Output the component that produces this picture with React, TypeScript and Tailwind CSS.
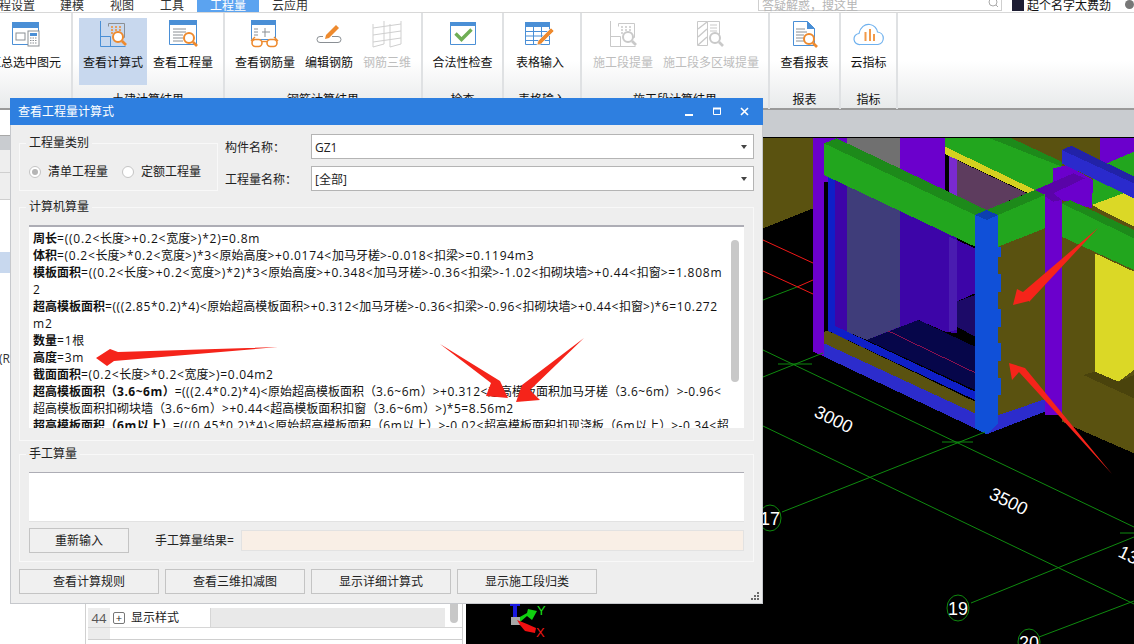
import React from "react";

const FONT = "font-['Microsoft_YaHei','Open_Sans','Noto_Sans_CJK_SC',sans-serif]";

const B = "#4a8fd6";
const O = "#ee8a2e";

function Mag({ x, y, c = O, r = 5 }: { x: number; y: number; c?: string; r?: number }) {
  return (
    <g fill="none" stroke={c}>
      <circle cx={x} cy={y} r={r} strokeWidth="2" fill="#fff" />
      <path d={`M${x + r - 1} ${y + r - 1}l4 4`} strokeWidth="2.6" />
    </g>
  );
}

function IconSummary() {
  return (
    <svg width="30" height="28" viewBox="0 0 30 28">
      <path d="M2.5 2.5h26v22h-26z" fill="#fff" stroke={B} />
      <rect x="2" y="2" width="27" height="6" fill={B} />
      <rect x="6" y="13" width="9" height="7" fill="none" stroke="#8a8f94" />
      <rect x="18" y="11" width="11" height="15" fill="#fff" stroke="#8a8f94" />
      <rect x="20" y="13" width="7" height="3" fill={B} />
      <path d="M20 18h7M20 20.5h7M20 23h7" stroke="#8a8f94" strokeDasharray="1.5 1" />
    </svg>
  );
}
function IconCalc({ gray = false }: { gray?: boolean }) {
  const s = gray ? "#c9c9c9" : B;
  const o = gray ? "#c9c9c9" : O;
  const g = gray ? "#c9c9c9" : "#8a8f94";
  return (
    <svg width="30" height="28" viewBox="0 0 30 28">
      <path d="M2.5 1v25.5h25M2.5 16.5h10v10" fill="none" stroke={s} />
      <path d="M10.5 6.5V3.5h16v14h-6" fill="none" stroke={g} />
      <path d="M13 7h2M17 7h2M21 7h2M13 10h2M17 10h2M21 10h2M13 13h2" stroke={gray ? "#c9c9c9" : "#ee8a2e"} strokeWidth="1.6" />
      <Mag x={20} y={17} c={gray ? "#c9c9c9" : o} />
    </svg>
  );
}
function IconQty() {
  return (
    <svg width="30" height="30" viewBox="0 0 30 30">
      <path d="M1.5 1.5h27v24h-27z" fill="#fff" stroke={B} />
      <rect x="1" y="1" width="28" height="5" fill={B} />
      <path d="M5 10h13M5 13h13M5 16h10M5 19h10M5 22h10" stroke="#8a8f94" />
      <Mag x={21} y={19} />
    </svg>
  );
}
function IconGlasses() {
  return (
    <svg width="30" height="30" viewBox="0 0 30 30">
      <path d="M1.5 1.5h24v19h-24z" fill="#fff" stroke={B} />
      <rect x="1" y="1" width="25" height="5" fill={B} />
      <path d="M4 10h4M4 13h4M4 16h4M15 9v9M12 13h8" stroke="#8a8f94" />
      <path d="M1 22l4-4M28 22l-4-4" stroke={O} strokeWidth="1.4" />
      <rect x="2" y="20.5" width="10" height="7" rx="3.4" fill="#fff" stroke={O} strokeWidth="1.6" />
      <rect x="17" y="20.5" width="10" height="7" rx="3.4" fill="#fff" stroke={O} strokeWidth="1.6" />
      <path d="M12 22.5h5" stroke={O} strokeWidth="1.4" />
    </svg>
  );
}
function IconEdit() {
  return (
    <svg width="26" height="28" viewBox="0 0 26 28">
      <path d="M16 16.5h6a3 3 0 0 1 0 6H4a3 3 0 0 1 0-6h3" fill="none" stroke="#8a8f94" />
      <path d="M10 15l10-10 3 3-10 10-4 1z" fill={O} />
    </svg>
  );
}
function IconGrid() {
  return (
    <svg width="30" height="28" viewBox="0 0 30 28">
      <path d="M1 4v23M12 1v23M18 4v23M29 1v23M1 8l28-4M1 15l28-4M1 22l28-4M1 27l11-3M18 27l11-3" fill="none" stroke="#cfcfcf" />
    </svg>
  );
}
function IconCheck() {
  return (
    <svg width="26" height="24" viewBox="0 0 26 24">
      <path d="M.5.5h25v22H.5z" fill="#fff" stroke={B} />
      <rect x="0" y="0" width="26" height="4" fill={B} />
      <path d="M5.5 11.5l6 6 10-10" fill="none" stroke="#6fae55" strokeWidth="3.4" />
    </svg>
  );
}
function IconTable() {
  return (
    <svg width="30" height="24" viewBox="0 0 30 24">
      <path d="M.5.5h24v22H.5z" fill="#fff" stroke={B} />
      <rect x="0" y="0" width="25" height="5" fill={B} />
      <path d="M1 9.5h24M1 14h24M1 18.5h24M8.5 5v18M16.5 5v18" stroke={B} />
      <path d="M13 19l13-13 3 3-13 13-4 1z" fill={O} stroke="#fff" strokeWidth=".6" />
    </svg>
  );
}
function IconHatch() {
  return (
    <svg width="30" height="28" viewBox="0 0 30 28">
      <path d="M1.5 1.5h10v24h-10z" fill="#fff" stroke="#c9c9c9" />
      <path d="M2 9l9-7M2 17l9-8M2 25l9-8" stroke="#c9c9c9" strokeWidth="1.4" />
      <path d="M11.500 1.500h12v13M14 5h7M14 8h7M14 11h7" fill="none" stroke="#c9c9c9" />
      <Mag x={19} y={18} c="#c9c9c9" />
    </svg>
  );
}
function IconReport() {
  return (
    <svg width="26" height="28" viewBox="0 0 26 28">
      <path d="M1.500 1.500h14l7 7v17h-21z" fill="#fff" stroke={B} />
      <path d="M15 1l8 8h-8z" fill={B} />
      <path d="M4 9h9M4 12h11M4 15h8M4 18h8M4 21h8" stroke="#8a8f94" />
      <Mag x={17} y={19} />
    </svg>
  );
}
function IconCloud() {
  return (
    <svg width="32" height="24" viewBox="0 0 32 24">
      <path d="M7 22.500a5.500 5.500 0 0 1-1-11c1-6 6-10 11-9 4 .6 7 4 7.500 7.500a6.300 6.300 0 0 1 .500 12.500z" fill="#fff" stroke="#6fb1ee" strokeWidth="1.200" />
      <path d="M12.500 10v9M17 7v12M21 12v7" stroke="#f29a4a" strokeWidth="2" />
    </svg>
  );
}

type Item = { w: number; label: string; icon: React.ReactNode; active?: boolean; gray?: boolean };

function Group({ width, pl = 0, label, items }: { width: number; pl?: number; label: string; items: Item[] }) {
  return (
    <div className="h-[96px] flex flex-col border-r-2 border-[#dfe1e3] shrink-0" style={{ width }}>
      <div className="flex h-[67px] mt-[5px]" style={{ paddingLeft: pl }}>
        {items.map((it) => (
          <div
            key={it.label}
            className={`flex flex-col items-center shrink-0 ${it.active ? "bg-[#c8d8ee]" : ""}`}
            style={{ width: it.w }}
          >
            <div className="h-[29px] mt-[1px] flex items-center justify-center">{it.icon}</div>
            <div className={`mt-[6px] text-[12px] leading-[18px] whitespace-nowrap ${it.gray ? "text-[#bdbdbd]" : "text-[#111]"}`}>
              {it.label}
            </div>
          </div>
        ))}
      </div>
      <div className="text-center text-[12px] leading-[18px] mt-[6px] text-[#111] whitespace-nowrap">{label}</div>
    </div>
  );
}

function Legend({ children }: { children: React.ReactNode }) {
  return <div className="absolute left-[6px] -top-[10px] bg-[#eeeeee] px-[3px] text-[12px] leading-[18px] text-[#222]">{children}</div>;
}

function Btn({ children, w = 140 }: { children: React.ReactNode; w?: number }) {
  return (
    <div
      className="h-[25px] border border-[#c4c4c4] bg-[#f0f0f0] flex items-center justify-center text-[12px] text-[#222] shrink-0"
      style={{ width: w }}
    >
      {children}
    </div>
  );
}

function Select({ value }: { value: string }) {
  return (
    <div className="flex-1 h-[25px] bg-white border border-[#b4b4b4] flex items-center justify-between pl-[3px] pr-[6px] text-[12px] text-[#222]">
      <span className="pt-[2px]">{value}</span>
      <svg width="6" height="4" viewBox="0 0 6 4"><path d="M0 0h6L3 4z" fill="#444" /></svg>
    </div>
  );
}

function Spaced({ text, track }: { text: string; track: string }) {
  return (
    <>
      {text.split(/([\x00-\x7f]+)/).map((p, i) =>
        i % 2 === 1 ? (
          <span key={i} className={track}>{p}</span>
        ) : (
          <span key={i}>{p}</span>
        )
      )}
    </>
  );
}

const LINES: [string, string, string][] = [
  ["周长", "=((0.2<长度>+0.2<宽度>)*2)=0.8m", "tracking-[0.77px]"],
  ["体积", "=(0.2<长度>*0.2<宽度>)*3<原始高度>+0.0174<加马牙槎>-0.018<扣梁>=0.1194m3", "tracking-[0.72px]"],
  ["模板面积", "=((0.2<长度>+0.2<宽度>)*2)*3<原始高度>+0.348<加马牙槎>-0.36<扣梁>-1.02<扣砌块墙>+0.44<扣窗>=1.808m", "tracking-[0.77px]"],
  ["", "2", "tracking-[0.77px]"],
  ["超高模板面积", "=(((2.85*0.2)*4)<原始超高模板面积>+0.312<加马牙槎>-0.36<扣梁>-0.96<扣砌块墙>+0.44<扣窗>)*6=10.272", "tracking-[0.6px]"],
  ["", "m2", "tracking-[0.77px]"],
  ["数量", "=1根", "tracking-[0.77px]"],
  ["高度", "=3m", "tracking-[0.77px]"],
  ["截面面积", "=(0.2<长度>*0.2<宽度>)=0.04m2", "tracking-[0.68px]"],
  ["超高模板面积（3.6~6m）", "=(((2.4*0.2)*4)<原始超高模板面积（3.6~6m）>+0.312<超高模板面积加马牙槎（3.6~6m）>-0.96<", "tracking-[0.5px]"],
  ["", "超高模板面积扣砌块墙（3.6~6m）>+0.44<超高模板面积扣窗（3.6~6m）>)*5=8.56m2", "tracking-[0.55px]"],
  ["超高模板面积（6m以上）", "=(((0.45*0.2)*4)<原始超高模板面积（6m以上）>-0.02<超高模板面积扣现浇板（6m以上）>-0.34<超", "tracking-[0.6px]"],
];

function Scene() {
  const olive = "#5a5210";
  const green = "#22a61e";
  const dgreen = "#1d8a1a";
  const purple = "#6b00cc";
  const blue = "#1050d8";
  const base = "#2c2ccc";
  return (
    <svg className="block w-full h-full" viewBox="466 137 668 507" shapeRendering="crispEdges">
      <g transform="translate(760 130) scale(.3333)">
        <polygon points="10,25 160,25 160,235 10,295" fill={olive} />
        <polygon points="690,25 1020,25 1020,130 1122,130 1122,300 900,230" fill={olive} />
        <polygon points="1020,25 1122,25 1122,65 1020,110" fill={purple} />
        <polygon points="160,25 192,25 192,680 160,665" fill={purple} />
        <rect x="192" y="25" width="68" height="130" fill={purple} />
        <rect x="260" y="25" width="160" height="130" fill="#707070" />
        <rect x="420" y="25" width="135" height="200" fill={purple} />
        <polygon points="205,140 260,165 260,605 205,590" fill="#3d05a8" />
        <polygon points="205,140 225,150 225,600 205,590" fill="#0f1fc8" />
        <polygon points="260,165 420,240 420,590 320,630 260,605" fill="#3f3d7a" />
        <polygon points="420,240 590,320 590,610 555,605 475,570 320,630 420,590" fill="#3d05a8" />
        <polygon points="590,90 800,190 680,240 590,200" fill="#5d3c5e" />
        <polygon points="568,75 590,85 590,200 568,190" fill="#7a2ad0" />
        <polygon points="568,320 590,330 590,600 568,605" fill="#4a1cb0" />
        <polygon points="590,330 645,355 645,490 590,515" fill="#3d05a8" />
        <polygon points="590,515 645,495 645,620 590,590" fill="#1c0a68" />
        <polygon points="320,630 475,570 645,650 645,780" fill="#06064a" />
        <line x1="385" y1="603" x2="645" y2="728" stroke="#8a1050" strokeWidth="3" />
        <polygon points="205,590 225,588 645,785 645,810 205,603" fill="#0f1fc8" />
        <polygon points="192,605 205,603 645,815 645,850 192,640" fill={olive} />
        <polygon points="192,640 645,850 645,895 192,680" fill={base} />
        <polygon points="555,25 690,25 905,110 880,115 880,165 825,180 555,50" fill={green} />
        <polygon points="690,25 755,25 905,95 905,110" fill={dgreen} />
        <polygon points="555,50 825,180 805,190 555,72" fill="#d6d020" />
        <polygon points="905,320 1122,420 1122,970 905,875" fill={olive} />
        <polygon points="1005,370 1122,425 1122,720 1075,755 1005,725" fill="#dbd826" />
        <polygon points="970,735 1005,725 1075,755 1122,735 1122,805" fill="#4a430c" />
        <polygon points="995,155 1040,100 1122,65 1122,205 1090,190 995,225" fill={green} />
        <polygon points="995,225 1090,190 1122,205 1122,290" fill="#dbd826" />
        <rect x="855" y="190" width="50" height="665" fill={purple} />
        <polygon points="880,115 920,105 1000,150 995,235 905,210 855,190 825,180 880,160" fill={purple} />
        <polygon points="825,180 940,130 975,145 880,190 905,210 880,215" fill="#5a04a8" />
        <polygon points="905,60 935,47 1122,140 1122,205 905,100" fill="#2a2acc" />
        <polygon points="905,60 935,47 1122,140 1122,160" fill="#2222a8" />
        <polygon points="905,220 930,210 1122,300 1122,420 905,320" fill={green} />
        <polygon points="905,220 930,210 1122,300 1122,325" fill={dgreen} />
        <polygon points="192,40 645,255 645,350 192,135" fill={green} />
        <polygon points="192,40 230,25 680,240 645,255" fill={dgreen} />
        <polygon points="715,255 855,190 855,295 715,350" fill={green} />
        <polygon points="680,240 825,180 855,195 715,255" fill={dgreen} />
        <polygon points="715,350 855,295 855,810 715,855" fill={olive} />
        <polygon points="715,855 855,808 855,845 680,913" fill={base} />
        <polygon points="645,255 680,240 715,255 715,880 680,913 645,895" fill={blue} />
        <polygon points="645,255 680,240 715,255 680,270" fill="#0c3fb0" />
        <rect x="715" y="350" width="8" height="32" fill={blue} />
        <rect x="715" y="433" width="8" height="52" fill={blue} />
        <rect x="715" y="538" width="8" height="52" fill={blue} />
        <rect x="715" y="640" width="8" height="52" fill={blue} />
        <rect x="715" y="743" width="8" height="52" fill={blue} />
      </g>
      <g shapeRendering="auto" strokeWidth="1" fill="none">
        <path d="M763 240l50 23M763 271l50 23M797 287l16-7" stroke="#f01818" />
        <path d="M763 300l34-13M763 377l60-24M778 364h34M942 442h31M1120 533h14" stroke="#0f8a0f" />
        <path d="M763 350L1134 527M763 426L1134 604M782 512L985 432M971 603L1134 537M1039 637L1134 601" stroke="#0f8a0f" />
        <ellipse cx="770" cy="518" rx="11" ry="13" stroke="#0f8a0f" />
        <ellipse cx="958" cy="608" rx="11" ry="13" stroke="#0f8a0f" />
        <ellipse cx="1029" cy="642" rx="11" ry="13" stroke="#0f8a0f" />
      </g>
      <g fill="#fff" fontFamily="'Liberation Sans', sans-serif" shapeRendering="auto">
        <text x="770" y="525" fontSize="18" textAnchor="middle">17</text>
        <text x="958" y="615" fontSize="18" textAnchor="middle">19</text>
        <text x="1029" y="649" fontSize="18" textAnchor="middle">20</text>
        <text transform="translate(813 416) rotate(26)" fontSize="18">3000</text>
        <text transform="translate(988 498) rotate(26)" fontSize="18">3500</text>
        <text transform="translate(1117 556) rotate(26)" fontSize="18">13</text>
        <text x="537" y="615" fontSize="13" fill="#19e019">Y</text>
        <text x="536" y="637" fontSize="13" fill="#f01818">X</text>
      </g>
      <g shapeRendering="auto">
        <rect x="513" y="604" width="4" height="13" fill="#1818e0" />
        <rect x="510" y="604" width="10" height="2" fill="#1818e0" />
        <polygon points="518,618 527,613 528,609 537,611 532,620 527,616 520,622" fill="#10d010" />
        <rect x="511" y="617" width="9" height="8" fill="#a8a8a8" />
        <polygon points="517,620 527,624 536,628 535,633 525,631 520,625" fill="#f01010" />
      </g>
      <polygon points="1098,228 1029,302 1029,301 1013,305 1017,289 1023,292" fill="#f5241a" shapeRendering="auto" />
      <polygon points="1112,474 1025,368 1009,363 1012,380 1019,372" fill="#f5241a" shapeRendering="auto" />
    </svg>
  );
}

export default function App() {
  return (
    <div className={`relative w-[1134px] h-[644px] overflow-hidden bg-white flex flex-col ${FONT}`}>
      <div className="h-[13px] border-b border-[#d8d8d8] flex text-[12px] leading-[11px] text-[#333] shrink-0 overflow-hidden">
        <div className="w-[197px] flex shrink-0 relative overflow-hidden">
          <span className="ml-[-1px] w-[61px] whitespace-nowrap">程设置</span>
          <span className="w-[50px]">建模</span>
          <span className="w-[50px]">视图</span>
          <span className="w-[37px]">工具</span>
        </div>
        <div className="w-[62px] bg-[#5ba3f0] text-white text-center shrink-0">工程量</div>
        <div className="w-[13px] shrink-0" />
        <div className="shrink-0 w-[486px]">云应用</div>
        <div className="w-[244px] h-[11px] border border-t-0 border-[#cfcfcf] pl-[3px] text-[#b5b5b5] shrink-0 flex justify-between pr-[2px]">
          <span>答疑解惑，搜这里</span>
          <svg width="11" height="9" viewBox="0 0 11 9"><circle cx="5" cy="2" r="4" fill="none" stroke="#aaa" /><path d="M8 5l2 2" stroke="#aaa" /></svg>
        </div>
        <div className="w-[12px] h-[11px] bg-[#1d1d33] ml-[10px] shrink-0" />
        <div className="ml-[3px] text-[#111] shrink-0 whitespace-nowrap w-[98px]">起个名字太费劲</div>
        <div className="w-[9px] h-[9px] rounded-full bg-[#777] shrink-0" />
      </div>
      <div className="h-[97px] shrink-0 flex border-b-2 border-[#9a9a9a] bg-gradient-to-b from-white from-50% to-[#e8eaeb]">
        <Group width={73} label="" items={[{ w: 50, label: "汇总选中图元", icon: <IconSummary /> }]} />
        <Group width={152} pl={6} label="土建计算结果" items={[
          { w: 68, label: "查看计算式", icon: <IconCalc />, active: true },
          { w: 72, label: "查看工程量", icon: <IconQty /> },
        ]} />
        <Group width={198} pl={4} label="钢筋计算结果" items={[
          { w: 72, label: "查看钢筋量", icon: <IconGlasses /> },
          { w: 56, label: "编辑钢筋", icon: <IconEdit /> },
          { w: 60, label: "钢筋三维", icon: <IconGrid />, gray: true },
        ]} />
        <Group width={81} label="检查" items={[{ w: 79, label: "合法性检查", icon: <IconCheck /> }]} />
        <Group width={78} label="表格输入" items={[{ w: 72, label: "表格输入", icon: <IconTable /> }]} />
        <Group width={188} pl={5} label="施工段计算结果" items={[
          { w: 72, label: "施工段提量", icon: <IconCalc gray />, gray: true },
          { w: 104, label: "施工段多区域提量", icon: <IconHatch />, gray: true },
        ]} />
        <Group width={71} label="报表" items={[{ w: 69, label: "查看报表", icon: <IconReport /> }]} />
        <Group width={57} label="指标" items={[{ w: 55, label: "云指标", icon: <IconCloud /> }]} />
      </div>

      <div className="flex-1 flex min-h-0">
        <div className="w-[466px] shrink-0 flex flex-col bg-white">
          <div className="h-[25px] shrink-0" />
          <div className="h-[15px] bg-[#c9ccd0] border-t border-[#a8a8a8] shrink-0" />
          <div className="h-[23px] bg-[#eeeeee] border-b border-[#cfcfcf] shrink-0" />
          <div className="h-[27px] bg-[#eeeeee] border-b border-[#cfcfcf] shrink-0" />
          <div className="h-[52px] shrink-0" />
          <div className="h-[21px] bg-[#c8d8ee] shrink-0" />
          <div className="h-[77px] shrink-0" />
          <div className="h-[17px] text-[12px] leading-[17px] text-[#333] shrink-0 -ml-[1px]">(R</div>
          <div className="flex-1 pl-[85px] flex flex-col justify-end">
            <div className="h-[40px] border-l border-[#d0d0d0] pl-[2px] flex flex-col text-[13px]">
              <div className="flex-1 border-r border-[#cfcfcf] mr-[3px] flex flex-col">
                <div className="h-[4px]" />
                <div className="h-[20px] flex border-b border-[#d6d6d6]">
                  <div className="w-[22px] bg-[#ececec] text-[#555] text-center leading-[20px]">44</div>
                  <div className="w-[101px] flex items-center pl-[3px] gap-[6px] border-r border-[#d6d6d6] text-[#222] text-[12px]">
                    <span className="w-[12px] h-[12px] border border-[#777] rounded-[2px] text-[11px] leading-[9px] text-center">+</span>
                    显示样式
                  </div>
                  <div className="w-[234px] bg-[#e9e9e9]" />
                  <div className="w-[16px] relative"><div className="absolute left-[5px] -top-[4px] w-[8px] h-[19px] bg-[#c8c8c8] rounded-b-[4px]" /></div>
                </div>
                <div className="h-[11px] flex"><div className="w-[22px] bg-[#ececec]" /></div>
                <div className="border-t border-[#cfcfcf] h-[4px]" />
              </div>
            </div>
          </div>
        </div>
        <div className="flex-1 flex flex-col min-w-0">
          <div className="h-[27px] bg-[#c9ccd0] shrink-0" />
          <div className="flex-1 bg-black min-h-0 relative">
            <div className="absolute inset-0"><Scene /></div>
          </div>
        </div>
      </div>

      {/* Dialog window */}
      <div className="absolute left-[10px] top-[98px] w-[753px] h-[506px] bg-[#eeeeee] border-r border-b border-l border-[#c6c8cc] flex flex-col">
        <div className="h-[27px] bg-[#2e7fe0] text-white text-[12px] flex items-center pl-[8px] shrink-0 relative -mx-px">
          <span>查看工程量计算式</span>
          <svg className="absolute right-[8px] top-[8px]" width="70" height="12" viewBox="0 0 70 12">
            <path d="M0 9h8" stroke="#fff" strokeWidth="2" />
            <path d="M28.500 2.500h7v6h-7z" fill="none" stroke="#fff" />
            <path d="M28 2.500h8" stroke="#fff" strokeWidth="2" />
            <path d="M56 2l7 7M63 2l-7 7" stroke="#fff" strokeWidth="1.600" />
          </svg>
        </div>
        <div className="flex-1 flex flex-col px-[8px] min-h-0">
          <div className="flex gap-[7px] mt-[9px] h-[57px]">
            <div className="relative w-[199px] h-[48px] mt-[9px] border border-[#f8f8f8] flex items-center text-[12px] text-[#222]">
              <Legend>工程量类别</Legend>
              <div className="flex items-center mt-[10px] ml-[9px]">
                <span className="w-[12px] h-[12px] rounded-full border border-[#c4c4c4] bg-white flex items-center justify-center">
                  <span className="w-[6px] h-[6px] rounded-full bg-[#b5b5b5]" />
                </span>
                <span className="ml-[7px]">清单工程量</span>
                <span className="ml-[14px] w-[12px] h-[12px] rounded-full border border-[#c4c4c4] bg-white" />
                <span className="ml-[7px]">定额工程量</span>
              </div>
            </div>
            <div className="flex-1 flex flex-col gap-[7px] text-[12px] text-[#222]">
              <div className="flex items-center">
                <span className="w-[86px] shrink-0 pt-[3px]">构件名称：</span>
                <Select value="GZ1" />
              </div>
              <div className="flex items-center">
                <span className="w-[86px] shrink-0 pt-[3px]">工程量名称：</span>
                <Select value="[全部]" />
              </div>
            </div>
          </div>
          <div className="relative mt-[16px] h-[234px] border border-[#f8f8f8] pt-[17px] px-[9px] shrink-0">
            <Legend>计算机算量</Legend>
            <div className="relative h-[203px] bg-white border-t-2 border-[#adadb5] pl-[4px] pt-[3px] overflow-hidden">
              {LINES.map(([b, t, track], i) => (
                <div key={i} className="h-[17px] leading-[17px] text-[12px] text-[#111] whitespace-nowrap">
                  <span className="font-bold"><Spaced text={b} track={track} /></span><Spaced text={t} track={track} />
                </div>
              ))}
              <div className="absolute left-[702px] top-[13px] w-[8px] h-[142px] bg-[#c8c8c8] rounded-[4px]" />
            </div>
          </div>
          <div className="relative mt-[13px] h-[108px] border border-[#f8f8f8] pt-[17px] px-[9px] shrink-0">
            <Legend>手工算量</Legend>
            <div className="h-[50px] bg-white border-t border-b border-t-[#adadb5] border-b-[#e2e2e2]" />
            <div className="flex items-center mt-[6px]">
              <Btn w={100}>重新输入</Btn>
              <span className="ml-[26px] w-[86px] text-[12px] text-[#222] whitespace-nowrap">手工算量结果=</span>
              <div className="flex-1 h-[21px] bg-[#f9efe6] border border-[#e2e2e2]" />
            </div>
          </div>
          <div className="flex gap-[6px] mt-[7px]">
            <Btn>查看计算规则</Btn>
            <Btn>查看三维扣减图</Btn>
            <Btn>显示详细计算式</Btn>
            <Btn>显示施工段归类</Btn>
          </div>
        </div>
        <svg className="absolute right-[2px] bottom-[2px]" width="9" height="9" viewBox="0 0 9 9">
          <path d="M6 0h2v2H6zM3 3h2v2H3zM6 3h2v2H6zM0 6h2v2H0zM3 6h2v2H3zM6 6h2v2H6z" fill="#6a6a6a" />
        </svg>
      </div>

      {/* Red annotation arrows */}
      <svg className="absolute left-0 top-0 pointer-events-none" width="1134" height="644" viewBox="0 0 1134 644">
        <polygon points="278,347 118,352 110,349 96,358 107,366 114,361" fill="#f5241a" />
        <polygon points="440,344 500,381 508,398 486,396 491,383" fill="#f5241a" />
        <polygon points="584,338 522,385 516,402 540,400 530,390" fill="#f5241a" />
      </svg>
    </div>
  );
}
